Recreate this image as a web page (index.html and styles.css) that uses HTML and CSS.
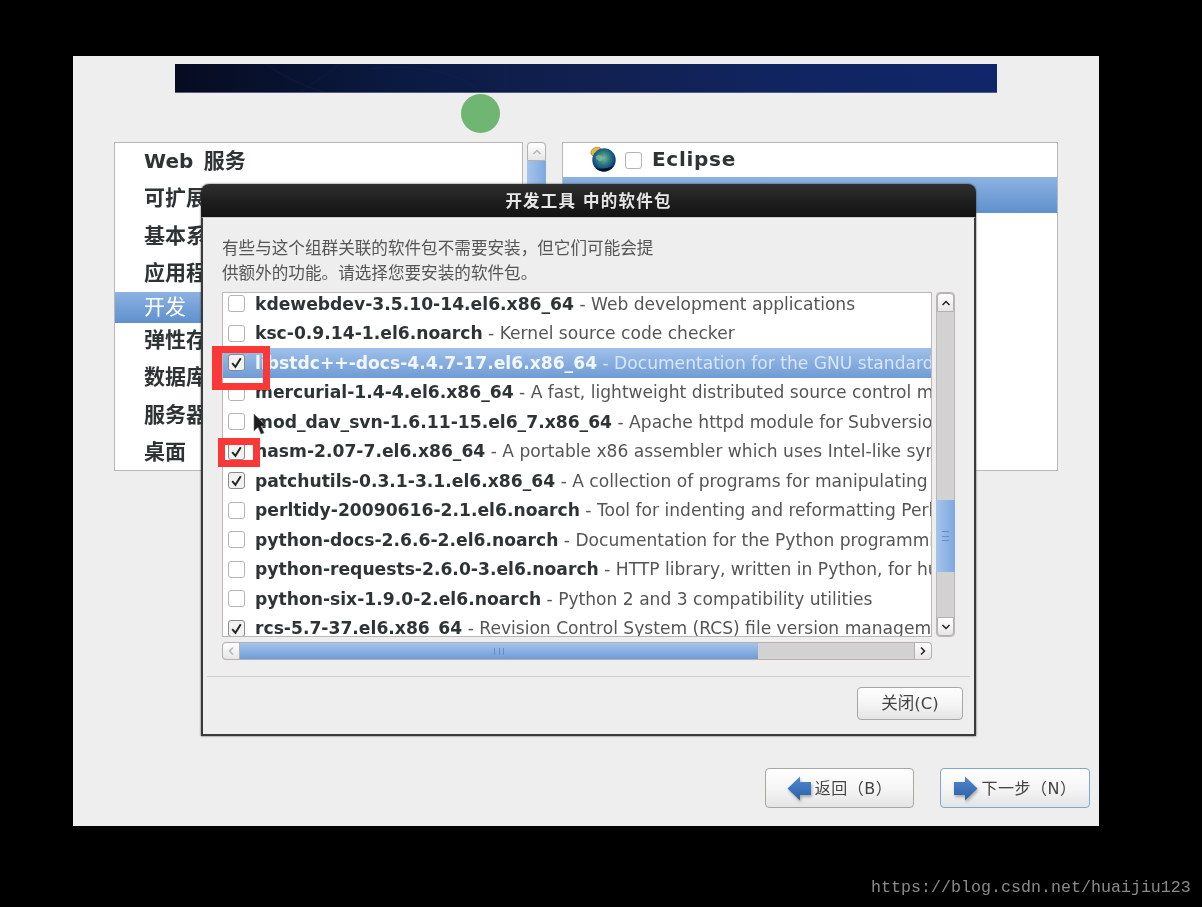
FILE: index.html
```html
<!DOCTYPE html>
<html lang="zh-CN">
<head>
<meta charset="utf-8">
<title>开发工具 中的软件包</title>
<link rel="stylesheet" href="styles.css">
</head>
<body>
<div class="screen">
  <div class="banner"><svg class="banner-art" viewBox="0 0 822 29" preserveAspectRatio="none"><path d="M90 0C110 14 130 24 150 29M165 0C150 12 135 22 125 29M195 5C240 0 285 8 305 29M330 0V29M640 29C660 8 700 2 740 5C760 10 775 20 785 29" fill="none" stroke="#1a2a5c" stroke-width="1"/></svg></div>
  <div class="spinner-row"><div class="spinner"></div></div>
  <div class="panes">
    <div class="list groups">
      <div class="group"><span class="latin">Web</span> 服务</div>
      <div class="group">可扩展文件系统</div>
      <div class="group">基本系统</div>
      <div class="group">应用程序</div>
      <div class="group group-sel">开发</div>
      <div class="group">弹性存储</div>
      <div class="group">数据库</div>
      <div class="group">服务器</div>
      <div class="group">桌面</div>
    </div>
    <div class="vscroll panes-scroll">
      <div class="sbtn sbtn-v"><svg class="chev" viewBox="0 0 10 6"><path d="M1.500 5 5 1.500 8.500 5" fill="none" stroke="#b5b5b5" stroke-width="1.500"/></svg></div>
      <div class="thumb-full"></div>
    </div>
    <div class="list options">
      <div class="option">
        <svg class="globe" viewBox="0 0 26 26">
          <defs>
            <radialGradient id="g" cx="48%" cy="42%" r="58%">
              <stop offset="0" stop-color="#7fb59a"/><stop offset=".45" stop-color="#2f7f7a"/><stop offset=".75" stop-color="#14528f"/><stop offset="1" stop-color="#08203f"/>
            </radialGradient>
          </defs>
          <path d="M1 7C0 2 5 0 9 0l3 3-7 8z" fill="#e3bb3a" stroke="#8a6d16" stroke-width=".6"/>
          <circle cx="14" cy="13" r="11.700" fill="url(#g)"/>
          <path d="M6 9c3-2 5-1 6 1s-1 5-3 4-4-3-3-5z" fill="#8fc7a0" opacity=".6"/>
          <path d="M5 20.500c4 5 13 5.500 18-1.500-6 3-13 3.500-18 1.500z" fill="#06121c"/>
        </svg>
        <span class="box"></span>
        <span class="option-name">Eclipse</span>
      </div>
      <div class="option option-sel"></div>
    </div>
  </div>
  <div class="nav">
    <div class="btn nav-btn"><svg class="arrow" viewBox="0 0 24 25"><defs><linearGradient id="a" x1="0" x2="0" y1="0" y2="1"><stop offset="0" stop-color="#5089cc"/><stop offset="1" stop-color="#2c5fa6"/></linearGradient></defs><path d="M13 .5 .5 12.500 13 24.500v-5.500h11V6H13z" fill="url(#a)"/></svg><span>返回（B）</span></div>
    <div class="btn nav-btn btn-focus"><svg class="arrow" viewBox="0 0 24 25"><path d="M11 .5 23.500 12.500 11 24.500v-5.500H0V6h11z" fill="url(#a)"/></svg><span>下一步（N）</span></div>
  </div>

  <div class="dialog">
    <div class="titlebar">开发工具 中的软件包</div>
    <div class="dialog-body">
      <p class="desc">有些与这个组群关联的软件包不需要安装，但它们可能会提<br>供额外的功能。请选择您要安装的软件包。</p>
      <div class="pkg-area">
        <div class="pkg-list">
          <div class="pkg-inner">
            <div class="pkg"><span class="box"></span><b>kdewebdev-3.5.10-14.el6.x86_64</b> - Web development applications</div>
            <div class="pkg"><span class="box"></span><b>ksc-0.9.14-1.el6.noarch</b> - Kernel source code checker</div>
            <div class="pkg pkg-sel"><span class="box box-on"><svg viewBox="0 0 14 14"><path d="M3 7.500 6 11 11 3" fill="none" stroke="#222" stroke-width="1.800"/></svg></span><b>libstdc++-docs-4.4.7-17.el6.x86_64</b> - Documentation for the GNU standard C++ library</div>
            <div class="pkg"><span class="box"></span><b>mercurial-1.4-4.el6.x86_64</b> - A fast, lightweight distributed source control management system</div>
            <div class="pkg"><span class="box"></span><b>mod_dav_svn-1.6.11-15.el6_7.x86_64</b> - Apache httpd module for Subversion server</div>
            <div class="pkg"><span class="box box-on"><svg viewBox="0 0 14 14"><path d="M3 7.500 6 11 11 3" fill="none" stroke="#222" stroke-width="1.800"/></svg></span><b>nasm-2.07-7.el6.x86_64</b> - A portable x86 assembler which uses Intel-like syntax</div>
            <div class="pkg"><span class="box box-on"><svg viewBox="0 0 14 14"><path d="M3 7.500 6 11 11 3" fill="none" stroke="#222" stroke-width="1.800"/></svg></span><b>patchutils-0.3.1-3.1.el6.x86_64</b> - A collection of programs for manipulating patch files</div>
            <div class="pkg"><span class="box"></span><b>perltidy-20090616-2.1.el6.noarch</b> - Tool for indenting and reformatting Perl scripts</div>
            <div class="pkg"><span class="box"></span><b>python-docs-2.6.6-2.el6.noarch</b> - Documentation for the Python programming language</div>
            <div class="pkg"><span class="box"></span><b>python-requests-2.6.0-3.el6.noarch</b> - HTTP library, written in Python, for human beings</div>
            <div class="pkg"><span class="box"></span><b>python-six-1.9.0-2.el6.noarch</b> - Python 2 and 3 compatibility utilities</div>
            <div class="pkg"><span class="box box-on"><svg viewBox="0 0 14 14"><path d="M3 7.500 6 11 11 3" fill="none" stroke="#222" stroke-width="1.800"/></svg></span><b>rcs-5.7-37.el6.x86_64</b> - Revision Control System (RCS) file version management tools</div>
          </div>
        </div>
        <div class="vscroll pkg-vscroll">
          <div class="sbtn sbtn-v"><svg class="chev" viewBox="0 0 10 6"><path d="M1.500 5 5 1.500 8.500 5" fill="none" stroke="#222" stroke-width="1.500"/></svg></div>
          <div class="track-v">
            <div class="thumb-v"><span class="grip-v"></span></div>
          </div>
          <div class="sbtn sbtn-v sbtn-end"><svg class="chev" viewBox="0 0 10 6"><path d="M1.500 1 5 4.500 8.500 1" fill="none" stroke="#222" stroke-width="1.500"/></svg></div>
        </div>
        <div class="hscroll">
          <div class="sbtn sbtn-h"><svg class="chev-h" viewBox="0 0 6 10"><path d="M5 1.500 1.500 5 5 8.500" fill="none" stroke="#b5b5b5" stroke-width="1.500"/></svg></div>
          <div class="thumb-h"><span class="grip-h"></span></div>
          <div class="track-h"></div>
          <div class="sbtn sbtn-h sbtn-right"><svg class="chev-h" viewBox="0 0 6 10"><path d="M1 1.500 4.500 5 1 8.500" fill="none" stroke="#222" stroke-width="1.500"/></svg></div>
        </div>
      </div>
      <div class="sep"></div>
      <div class="dialog-actions"><div class="btn close-btn">关闭(C)</div></div>
    </div>
  </div>

  <div class="mark mark-a"></div>
  <div class="mark mark-b"></div>
  <svg class="cursor" viewBox="0 0 13 22"><path d="M1 1v17l4-4 3 7 3-1-3-7h5z" fill="#1c1c1c" stroke="#777" stroke-width=".6"/></svg>
</div>
<div class="watermark">https://blog.csdn.net/huaijiu123</div>
</body>
</html>
```
FILE: styles.css
```css
* { box-sizing: border-box; }
html, body { margin: 0; height: 907px; background: #000; overflow: hidden; }
body { position: relative; font-family: "DejaVu Sans", "Noto Sans CJK SC", sans-serif; padding: 56px 103px 0 73px; }

.screen { position: relative; width: 1026px; height: 770px; background: #eee; padding: 8px 41px 0; filter: blur(.55px); color: #2e3436; }

.banner { margin: 0 61px; height: 29px; background: linear-gradient(90deg, #060b20 0%, #0a1a42 28%, #11204f 50%, #10245f 72%, #10266a 100%); border-bottom: 1px solid #565c7c; }
.banner-art { display: block; width: 100%; height: 100%; opacity: .3; }
.spinner-row { display: flex; height: 49px; padding-top: 1px; }
.spinner { width: 39px; height: 39px; border-radius: 50%; background: #70b673; margin-left: 347px; }

.panes { display: flex; height: 329px; }
.list { background: #fff; border: 1px solid #bdb6b6; }
.groups { width: 409px; }
.group { height: 37.300px; padding-left: 29px; font-weight: 700; font-size: 21px; line-height: 37px; color: #2e3436; white-space: nowrap; overflow: hidden; }
.latin { font-size: 20px; letter-spacing: .1px; margin-right: 3px; }
.group-sel { height: 31px; line-height: 30px; margin: 0 0 -1px; background: linear-gradient(#8cb2e2, #5f90cd); color: #fff; font-weight: 400; }

.vscroll { width: 19px; display: flex; flex-direction: column; background: #d2d2d2; }
.panes-scroll { margin: 0 16px 0 4px; border-radius: 4px; }
.sbtn { background: linear-gradient(#fff, #e6e6e6); border: 1px solid #b5b1b1; display: flex; align-items: center; justify-content: center; flex: none; }
.sbtn-v { height: 19px; border-radius: 4px 4px 0 0; }
.sbtn-end { border-radius: 0 0 4px 4px; }
.chev { width: 10px; height: 6px; }
.chev-h { width: 6px; height: 10px; }
.thumb-full { flex: 1; background: linear-gradient(90deg, #a5c4ec, #7fa8de); }

.options { flex: 1; }
.option { height: 34px; display: flex; align-items: center; padding-left: 27px; font-weight: 700; font-size: 20px; }
.globe { width: 26px; height: 26px; flex: none; margin-right: 9px; }
.option-name { margin-left: 10px; letter-spacing: .7px; padding-bottom: 2px; }
.option-sel { height: 36px; background: linear-gradient(#8cb2e2, #5f90cd); }

.box { display: inline-flex; width: 17px; height: 17px; flex: none; background: #fff; border: 1.500px solid #b5b3b3; border-radius: 3px; align-items: center; justify-content: center; }
.box svg { width: 15px; height: 15px; }
.box-on { border-color: #8a8a8a; background: #f2f2f2; }

.nav { position: absolute; left: 692px; top: 712px; display: flex; gap: 26px; }
.btn { background: linear-gradient(#fff 0%, #f4f4f4 55%, #e4e4e4 100%); border: 1.500px solid #aaa6a2; border-radius: 4px; display: flex; align-items: center; justify-content: center; color: #444; }
.nav-btn { width: 149px; height: 40px; font-size: 16px; gap: 4px; letter-spacing: .5px; padding-bottom: 2px; }
.nav-btn + .nav-btn { width: 150px; gap: 4px; }
.btn-focus { border-color: #7fa6d8; }
.arrow { width: 24px; height: 25px; flex: none; margin-top: 2px; filter: drop-shadow(1px 2px 1.500px rgba(0,0,0,.3)); }

.dialog { position: absolute; left: 128px; top: 128px; width: 775px; height: 552px; display: flex; flex-direction: column; border-radius: 8px 8px 0 0; box-shadow: 0 0 2px #333; }
.titlebar { height: 33px; flex: none; background: linear-gradient(#2f2f2f, #1c1c1c 60%, #131313); border-radius: 8px 8px 0 0; color: #e6e6e6; font-size: 16.500px; letter-spacing: 1.200px; font-weight: 700; text-align: center; line-height: 35px; }
.dialog-body { flex: 1; background: #eee; border: 2px solid #3a3a3a; border-top: 1px solid #ccc; padding: 0 4px; display: flex; flex-direction: column; }
.desc { margin: 18px 0 0 15px; font-size: 16.600px; line-height: 25px; color: #555; height: 56px; white-space: nowrap; }
.pkg-area { display: grid; grid-template-columns: 710px 19px; column-gap: 4px; row-gap: 5px; margin-left: 15px; grid-template-rows: 345px 18px; }

.pkg-list { background: #fff; border: 1px solid #bdb6b6; overflow: hidden; }
.pkg-inner { margin-top: -4px; }
.pkg { height: 29.500px; display: flex; align-items: center; padding-left: 5px; white-space: pre; font-size: 17.100px; color: #555; }
.pkg .box { margin-right: 10px; }
.pkg b { color: #2e3436; white-space: pre; font-size: 17.170px; }
.pkg-sel { background: linear-gradient(#9fc0ea, #6f9bd5); color: #d8e6f8; }
.pkg-sel b { color: #f2f6fc; }

.pkg-vscroll { border-radius: 4px; border: 1px solid #bdb6b6; }
.track-v { flex: 1; padding-top: 188px; }
.thumb-v { height: 72px; margin: 0 -1px; background: linear-gradient(90deg, #a5c4ec, #7fa8de); display: flex; align-items: center; justify-content: center; }
.grip-v { width: 7px; height: 10px; border-top: 1px solid #6c8cb8; border-bottom: 1px solid #6c8cb8; background: linear-gradient(#6c8cb8, #6c8cb8) center / 100% 1px no-repeat; }

.hscroll { display: flex; height: 18px; background: #d2d2d2; border: 1px solid #b5b1b1; border-radius: 4px; }
.sbtn-h { width: 18px; margin: -1px 0 -1px -1px; border-radius: 4px 0 0 4px; }
.sbtn-right { margin: -1px -1px -1px 0; border-radius: 0 4px 4px 0; }
.thumb-h { width: 518px; background: linear-gradient(#a5c4ec, #6f9cd8); display: flex; align-items: center; justify-content: center; }
.grip-h { width: 10px; height: 7px; border-left: 1px solid #6c8cb8; border-right: 1px solid #6c8cb8; background: linear-gradient(#6c8cb8, #6c8cb8) center / 1px 100% no-repeat; }
.track-h { flex: 1; }

.sep { height: 1px; background: #cfcfcf; margin-top: 16px; flex: none; }
.dialog-actions { display: flex; justify-content: flex-end; padding: 10px 7px 0 0; }
.close-btn { width: 106px; height: 33px; font-size: 16.500px; padding-bottom: 4px; }

.mark { position: absolute; border: 7px solid #fb3838; }
.mark-a { left: 139px; top: 290px; width: 58px; height: 44px; border-left-width: 10px; }
.mark-b { left: 145px; top: 382px; width: 42px; height: 29px; }
.cursor { position: absolute; left: 180px; top: 357px; width: 13px; height: 22px; }

.watermark { position: absolute; left: 871px; top: 878px; font-family: "Liberation Mono", monospace; font-size: 16.670px; line-height: 20px; color: #8a8a8a; white-space: nowrap; filter: blur(.3px); }
```
